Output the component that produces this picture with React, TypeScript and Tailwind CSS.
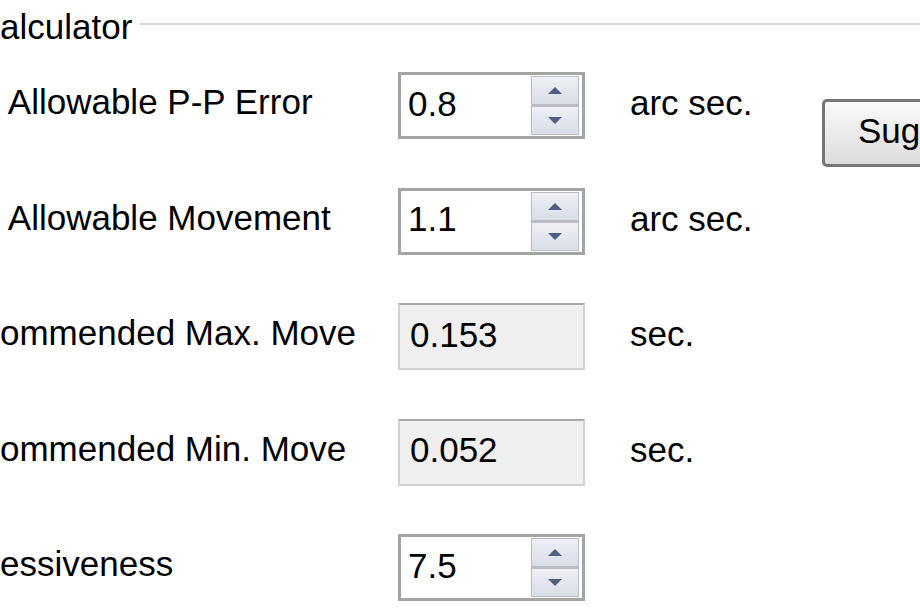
import React from "react";

const font = { fontFamily: '"Liberation Sans", Arial, sans-serif' };

function Arrow({ up }: { up: boolean }) {
  return (
    <svg width="16" height="9" viewBox="0 0 16 9" className="block">
      {up ? (
        <path d="M8 1 L15 8 L1 8 Z" fill="#4f5f82" />
      ) : (
        <path d="M1 1 L15 1 L8 8 Z" fill="#4f5f82" />
      )}
    </svg>
  );
}

function Spinner({ value }: { value: string }) {
  return (
    <div className="flex h-[67px] w-[187px] shrink-0 items-stretch border-[3px] border-[#a4a4a4] bg-white">
      <div className="flex flex-1 items-center pb-[5px] pl-[7px] text-[35px] leading-none text-black">{value}</div>
      <div className="my-[1px] mr-[3px] flex w-[48px] flex-col gap-[3px] bg-[#b9bcc4] p-[1px]">
        <div className="flex flex-1 items-center justify-center bg-gradient-to-b from-[#eef0f5] to-[#d9dde6]">
          <Arrow up />
        </div>
        <div className="flex flex-1 items-center justify-center bg-gradient-to-b from-[#eef0f5] to-[#d9dde6]">
          <Arrow up={false} />
        </div>
      </div>
    </div>
  );
}

function ReadOnly({ value }: { value: string }) {
  return (
    <div className="flex h-[67px] w-[187px] shrink-0 items-center border-2 border-[#d2d2d2] border-t-[#a9a9a9] bg-[#efefef] pb-[5px] pl-[10px] text-[35px] leading-none text-black">
      {value}
    </div>
  );
}

const rows = [
  { label: " Allowable P-P Error", kind: "spin", value: "0.8", unit: "arc sec." },
  { label: " Allowable Movement", kind: "spin", value: "1.1", unit: "arc sec." },
  { label: "ommended Max. Move", kind: "ro", value: "0.153", unit: "sec." },
  { label: "ommended Min. Move", kind: "ro", value: "0.052", unit: "sec." },
  { label: "essiveness", kind: "spin", value: "7.5", unit: "" },
];

export default function App() {
  return (
    <div className="h-[613px] w-[920px] overflow-hidden bg-white text-black" style={font}>
      <div className="flex h-[48px] items-center pt-[4px]">
        <span className="text-[35px] leading-none">alculator</span>
        <div className="ml-[8px] mt-[-4px] h-[2px] flex-1 bg-[#d6d6d6]" />
      </div>
      <div className="flex flex-col">
        {rows.map((r, i) => (
          <div key={i} className="flex h-[115.5px] items-center">
            <div className="w-[398px] shrink-0 whitespace-pre pb-[8px] text-[35px] leading-none">{r.label}</div>
            {r.kind === "spin" ? <Spinner value={r.value} /> : <ReadOnly value={r.value} />}
            <div className="ml-[45px] w-[192px] shrink-0 pb-[6px] text-[35px] leading-none">{r.unit}</div>
            {i === 0 && (
              <div className="mt-[54px] flex h-[68px] w-[120px] shrink-0 items-center rounded-[5px] border-[3px] border-[#767676] bg-gradient-to-b from-[#fafafa] to-[#dcdcdc] pb-[4px] pl-[33px] text-[35px] leading-none">
                Sug
              </div>
            )}
          </div>
        ))}
      </div>
    </div>
  );
}
